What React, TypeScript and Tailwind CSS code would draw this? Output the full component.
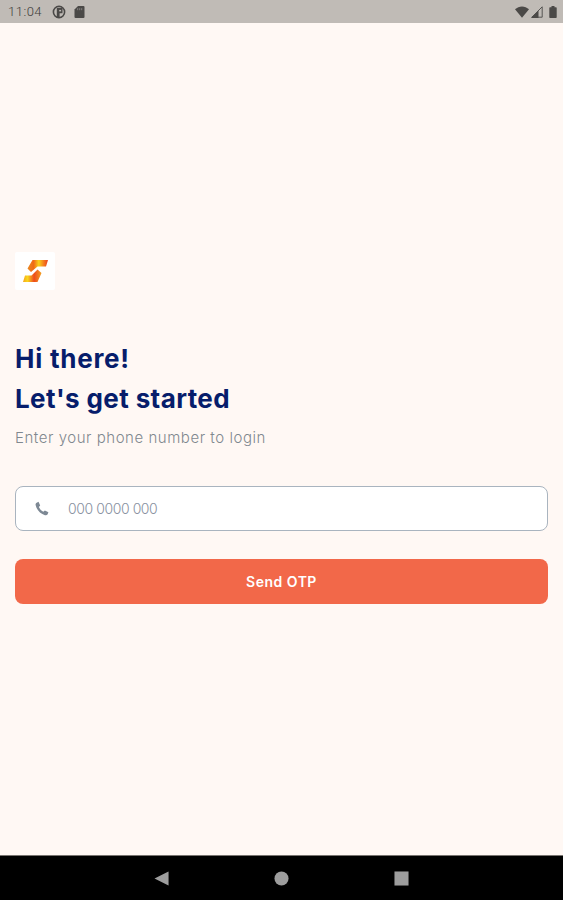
import type { ReactNode } from "react";

function StatusBar() {
  return (
    <header className="flex h-[23px] shrink-0 items-center bg-[#c0bbb6] pr-[6px] pl-[8px] text-[#4b4947]">
      <span className="w-[35px] font-['Roboto',sans-serif] text-[13px] leading-[23px] font-light tracking-[0.5px] whitespace-nowrap text-[#3f3d3b]">
        11:04
      </span>
      <svg className="ml-[9px] size-[14px]" viewBox="0 0 14 14">
        <circle cx="7" cy="7" r="5.600" fill="none" stroke="currentColor" strokeWidth="1.600" />
        <path d="M4.800 3H10.500V8.300H7.600V13H4.800z" fill="currentColor" />
        <path d="M7.200 4.900h1.900v1.500H7.200z" fill="#c0bbb6" />
      </svg>
      <svg className="ml-[8px] h-[12px] w-[11px]" viewBox="0 0 11 12">
        <path d="M4 0h5.500a1 1 0 0 1 1 1v10a1 1 0 0 1-1 1h-8a1 1 0 0 1-1-1V3.500z" fill="currentColor" />
        <path d="M3.700 2.200v2M5.700 2.200v2M7.700 2.200v2" stroke="#8b8885" strokeWidth="0.9" />
      </svg>
      <div className="ml-auto flex items-center">
        <svg className="h-[12px] w-[14px]" viewBox="0 0 14 12">
          <path d="M0 3.300C4-.6 10-.6 14 3.300L7 11.800z" fill="currentColor" />
        </svg>
        <svg className="ml-[2px] size-[12px]" viewBox="0 0 12 12">
          <path d="M.8 11.200 11.200.8v10.400z" fill="none" stroke="currentColor" strokeWidth="0.9" />
          <path d="M0 12 7.500 4.500V12z" fill="currentColor" />
        </svg>
        <svg className="ml-[6px] h-[12px] w-[8px]" viewBox="0 0 8 12">
          <path d="M2.500 0h3v1.200H7a.7.7 0 0 1 .7.7v9.400a.7.7 0 0 1-.7.7H1a.7.7 0 0 1-.7-.7V1.900a.7.7 0 0 1 .7-.7h1.500z" fill="currentColor" />
        </svg>
      </div>
    </header>
  );
}

function Logo() {
  return (
    <div className="flex h-[38px] w-[40px] items-center justify-center rounded-[2px] bg-white">
      <svg className="h-[24px] w-[27px]" viewBox="0 0 27 24">
        <defs>
          <linearGradient id="upper" x1="0" y1="0" x2="1" y2="0">
            <stop offset="0" stopColor="#e98a22" />
            <stop offset="0.3" stopColor="#f06a18" />
            <stop offset="0.55" stopColor="#f8d21c" />
            <stop offset="0.8" stopColor="#f47a1c" />
            <stop offset="1" stopColor="#e8401f" />
          </linearGradient>
          <linearGradient id="lower" x1="0" y1="0" x2="1" y2="0">
            <stop offset="0" stopColor="#f5a51c" />
            <stop offset="0.25" stopColor="#f9d71c" />
            <stop offset="0.6" stopColor="#ee4b1c" />
            <stop offset="1" stopColor="#f3a020" />
          </linearGradient>
        </defs>
        <path d="M10.500 1H26l-2 6.500H15.500L9 13 5.500 9.500z" fill="url(#upper)" />
        <path d="M15.500 10.500 19.500 14 15.500 23H1l2-6.500H9.500z" fill="url(#lower)" />
      </svg>
    </div>
  );
}

function NavButton({ label, children }: { label: string; children: ReactNode }) {
  return (
    <button aria-label={label} className="flex w-[120px] items-center justify-center">
      <svg className="size-[15px]" viewBox="0 0 16 16" fill="#9d9d9d">
        {children}
      </svg>
    </button>
  );
}

export default function App() {
  return (
    <div className="flex h-[900px] w-[563px] flex-col overflow-hidden bg-[#fff8f4] font-['Inter',sans-serif]">
      <StatusBar />

      <main className="flex-1 px-[15px] pt-[229px]">
        <Logo />

        <h1 className="mt-[49px] text-[26px] leading-[39.500px] font-bold whitespace-nowrap text-[#071d6b]">
          <span className="block tracking-[0.750px]">Hi there!</span>
          <span className="block tracking-[0.400px]">Let's get started</span>
        </h1>
        <p className="mt-[9px] text-[15px] leading-[22px] font-light tracking-[0.540px] whitespace-nowrap text-[#7f888f]">
          Enter your phone number to login
        </p>

        <div className="mt-[37px] flex h-[45px] items-center rounded-[8px] border border-[#a9b4bf] bg-white pl-[18px]">
          <svg className="size-[16px]" viewBox="0 0 16 16">
            <path
              d="M2.200 1.900 4.500.8 6.200 4.500 4.900 6C5.700 8 7.500 10 9.300 10.700L10.900 9.600 14.400 11.200 13.500 13.600C12.900 14.400 11.900 14.500 11 14.200 6.200 12.700 2.500 8.700 1.600 4.100 1.500 3.200 1.600 2.500 2.200 1.900z"
              fill="#7d8894"
            />
          </svg>
          <input
            type="tel"
            placeholder="000 0000 000"
            className="ml-[18px] min-w-0 flex-1 bg-transparent text-[14px] font-light tracking-[-0.420px] outline-none placeholder:text-[#8790a0]"
          />
        </div>

        <button className="mt-[28px] flex h-[45px] w-full items-center justify-center rounded-[8px] bg-[#f26849] text-[14px] font-semibold tracking-[0.5px] text-white">
          Send OTP
        </button>
      </main>

      <nav className="flex h-[45px] shrink-0 justify-center border-t border-[#77736f] bg-black">
        <NavButton label="Back">
          <path d="M.5 8 15.500.5v15z" />
        </NavButton>
        <NavButton label="Home">
          <circle cx="8" cy="8" r="7.500" />
        </NavButton>
        <NavButton label="Recents">
          <path d="M.5.5h15v15H.5z" />
        </NavButton>
      </nav>
    </div>
  );
}
